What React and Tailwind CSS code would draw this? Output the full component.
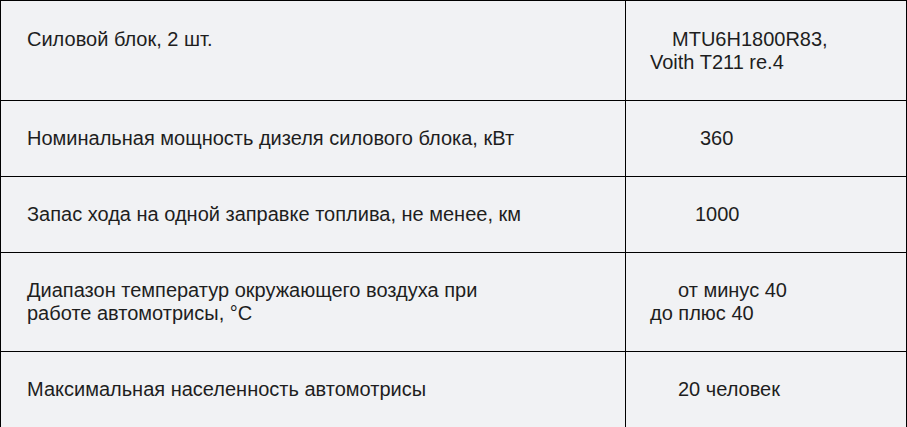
import React from 'react';

const rows = [
  {
    h: 'h-[100px]',
    left: ['Силовой блок, 2 шт.', '\u00a0'],
    right: [
      { t: 'MTU6H1800R83,', pad: 'pl-[22px]' },
      { t: 'Voith T211 re.4', pad: 'pl-0' },
    ],
  },
  {
    h: 'h-[76px]',
    left: ['Номинальная мощность дизеля силового блока, кВт'],
    right: [{ t: '360', pad: 'pl-[50px]' }],
  },
  {
    h: 'h-[76px]',
    left: ['Запас хода на одной заправке топлива, не менее, км'],
    right: [{ t: '1000', pad: 'pl-[45px]' }],
  },
  {
    h: 'h-[99px]',
    left: ['Диапазон температур окружающего воздуха при', 'работе автомотрисы, °С'],
    right: [
      { t: 'от минус 40', pad: 'pl-[28px]' },
      { t: 'до плюс 40', pad: 'pl-0' },
    ],
  },
  {
    h: 'h-[76px]',
    left: ['Максимальная населенность автомотрисы'],
    right: [{ t: '20 человек', pad: 'pl-[28px]' }],
  },
];

const App = () => {
  return (
    <div className="w-[907px] h-[427px] overflow-hidden bg-[#f1f2f4]">
      <div className="w-[907px] border-l border-r border-black bg-[#f1f2f4] text-[20px] leading-[23px] text-[#1e1e1e] font-['Liberation_Sans',Arial,sans-serif]">
        {rows.map((row, i) => (
          <div key={i} className={`grid grid-cols-[625px_1fr] border-t border-black ${row.h}`}>
            <div className="flex flex-col justify-center border-r border-black pl-[26px]">
              {row.left.map((l, j) => (
                <div key={j}>{l}</div>
              ))}
            </div>
            <div className="flex flex-col justify-center pl-[24px]">
              {row.right.map((r, j) => (
                <div key={j} className={r.pad}>{r.t}</div>
              ))}
            </div>
          </div>
        ))}
      </div>
    </div>
  );
};

export default App;
